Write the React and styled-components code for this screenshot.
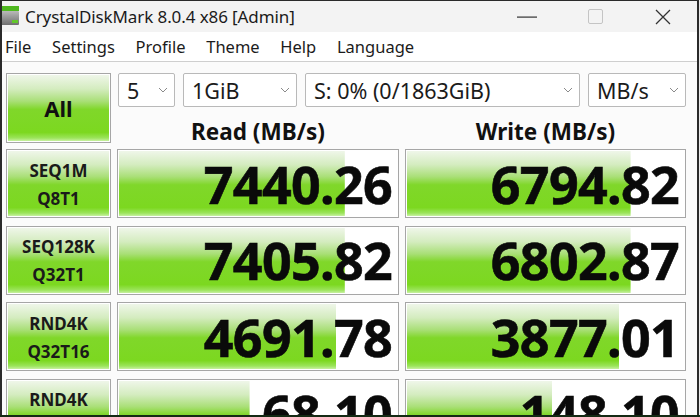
import React from "react";
import styled, { createGlobalStyle } from "styled-components";

const GlobalStyle = createGlobalStyle`
  html, body {
    margin: 0;
    padding: 0;
    background: #e9e9e9;
  }
  body {
    font-family: "Noto Sans", "Open Sans", sans-serif;
  }
`;

const green = `linear-gradient(to bottom,
  #f1f7ec 0%,
  #d4ecbf 22%,
  #a9df77 40%,
  #80d72a 52%,
  #7cd820 86%,
  #9be45a 94%,
  #d6f5b8 100%)`;

const Window = styled.div`
  width: 695px;
  height: 414px;
  overflow: hidden;
  background: #fbfbfb;
  border-top: 1px solid #2a2a2a;
  border-left: 2px solid #2a2a2a;
  border-right: 2px solid #2a2a2a;
  display: flex;
  flex-direction: column;
`;

const TitleBar = styled.div`
  height: 31px;
  flex: none;
  display: flex;
  align-items: center;
  background: #f3f3f3;
  color: #1b1b1b;
  font-size: 17px;
`;

const AppIcon = styled.svg`
  width: 22px;
  height: 24px;
  margin: -6px 3px 0 -2px;
  flex: none;
`;

const Title = styled.span`
  flex: 1;
  letter-spacing: -0.1px;
`;

const WinButton = styled.div`
  width: 68px;
  height: 31px;
  display: flex;
  align-items: center;
  justify-content: center;
`;

const MenuBar = styled.div`
  height: 29px;
  flex: none;
  display: flex;
  align-items: center;
  gap: 20.7px;
  padding-left: 3px;
  background: #ffffff;
  border-bottom: 1px solid #cfcfcf;
  color: #1b1b1b;
  font-size: 16.5px;
`;

const MenuItem = styled.span``;

const Body = styled.div`
  padding: 11px 0 0 4px;
  flex: 1;
  overflow: hidden;
`;

const Top = styled.div`
  display: grid;
  grid-template-columns: 105px 282px 281px;
  grid-template-rows: 34px 36px;
  column-gap: 6px;
`;

const cellBase = `
  box-sizing: border-box;
  border: 1px solid #a6a6a6;
  box-shadow: inset 0 0 0 1px #ffffff;
`;

const AllButton = styled.div`
  ${cellBase}
  grid-row: 1 / 3;
  background: ${green};
  display: flex;
  align-items: center;
  justify-content: center;
  font-weight: 700;
  font-size: 22px;
  color: #111;
`;

const Selects = styled.div`
  grid-column: 2 / 4;
  display: flex;
  gap: 8px;
  padding-left: 1px;
`;

const Select = styled.div`
  box-sizing: border-box;
  width: ${(p) => p.$w}px;
  height: 34px;
  border: 1px solid #b9b9b9;
  border-radius: 2px;
  background: #ffffff;
  display: flex;
  align-items: center;
  justify-content: space-between;
  padding: 0 6px 0 8px;
  font-size: 21.5px;
  color: #1b1b1b;
`;

const Chevron = styled.svg`
  width: 10px;
  height: 6px;
  flex: none;
`;

const Header = styled.div`
  display: flex;
  align-items: flex-end;
  justify-content: center;
  padding-bottom: 0;
  font-weight: 700;
  font-size: 22.5px;
  line-height: 1;
  color: #111;
`;

const Results = styled.div`
  margin-top: 6px;
  display: grid;
  grid-template-columns: 105px 282px 281px;
  grid-auto-rows: 69px;
  column-gap: 6px;
  row-gap: 7.5px;
`;

const Label = styled.div`
  ${cellBase}
  background: ${green};
  display: flex;
  flex-direction: column;
  align-items: center;
  justify-content: center;
  gap: 11px;
  padding-top: 1px;
  font-weight: 700;
  font-size: 17px;
  line-height: 1;
  color: #1a1a1a;
`;

const Value = styled.div`
  ${cellBase}
  background-color: #ffffff;
  background-image: ${green};
  background-repeat: no-repeat;
  background-size: ${(p) => p.$fill}% 100%;
  display: flex;
  align-items: center;
  justify-content: flex-end;
  padding-right: 6px;
  font-weight: 700;
  font-size: 52px;
  letter-spacing: -0.7px;
  line-height: 1;
  color: #0a0a0a;
  -webkit-text-stroke: 0.6px #0a0a0a;
`;

const BottomEdge = styled.div`
  width: 700px;
  height: 3px;
  background: #142a14;
`;

const rows = [
  { a: "SEQ1M", b: "Q8T1", read: "7440.26", rf: 81, write: "6794.82", wf: 80.5 },
  { a: "SEQ128K", b: "Q32T1", read: "7405.82", rf: 81, write: "6802.87", wf: 80.5 },
  { a: "RND4K", b: "Q32T16", read: "4691.78", rf: 78, write: "3877.01", wf: 76.5 },
  { a: "RND4K", b: "Q1T1", read: "68.10", rf: 47, write: "148.10", wf: 52.5 },
];

const Arrow = () => (
  <Chevron viewBox="0 0 10 6">
    <path d="M1 1 L5 5 L9 1" fill="none" stroke="#8a8a8a" strokeWidth="1" />
  </Chevron>
);

const App = () => {
  return (
    <>
      <GlobalStyle />
      <Window>
        <TitleBar>
          <AppIcon viewBox="0 0 22 24">
            <defs>
              <linearGradient id="disk" x1="0" y1="0" x2="0" y2="1">
                <stop offset="0" stopColor="#b9b9b9" />
                <stop offset="1" stopColor="#6f6f6f" />
              </linearGradient>
            </defs>
            <rect x="0" y="4" width="19" height="5" fill="#4fb81f" />
            <rect x="0" y="9" width="19" height="14" rx="1" fill="url(#disk)" />
            <rect x="12" y="18" width="6" height="3" fill="#62c72a" />
          </AppIcon>
          <Title>CrystalDiskMark 8.0.4 x86 [Admin]</Title>
          <WinButton>
            <svg width="20" height="2" viewBox="0 0 20 2">
              <rect x="0" y="0.5" width="20" height="1.2" fill="#333" />
            </svg>
          </WinButton>
          <WinButton>
            <svg width="15" height="15" viewBox="0 0 15 15">
              <rect x="0.5" y="0.5" width="14" height="14" rx="1.5" fill="none" stroke="#c4c4c4" />
            </svg>
          </WinButton>
          <WinButton>
            <svg width="16" height="16" viewBox="0 0 16 16">
              <path d="M1 1 L15 15 M15 1 L1 15" stroke="#333" strokeWidth="1.3" />
            </svg>
          </WinButton>
        </TitleBar>
        <MenuBar>
          <MenuItem>File</MenuItem>
          <MenuItem>Settings</MenuItem>
          <MenuItem>Profile</MenuItem>
          <MenuItem>Theme</MenuItem>
          <MenuItem>Help</MenuItem>
          <MenuItem>Language</MenuItem>
        </MenuBar>
        <Body>
          <Top>
            <AllButton>All</AllButton>
            <Selects>
              <Select $w={57}>
                5
                <Arrow />
              </Select>
              <Select $w={114}>
                1GiB
                <Arrow />
              </Select>
              <Select $w={275}>
                S: 0% (0/1863GiB)
                <Arrow />
              </Select>
              <Select $w={98}>
                MB/s
                <Arrow />
              </Select>
            </Selects>
            <Header>Read (MB/s)</Header>
            <Header>Write (MB/s)</Header>
          </Top>
          <Results>
            {rows.map((r, i) => (
              <React.Fragment key={i}>
                <Label>
                  <span>{r.a}</span>
                  <span>{r.b}</span>
                </Label>
                <Value $fill={r.rf}>{r.read}</Value>
                <Value $fill={r.wf}>{r.write}</Value>
              </React.Fragment>
            ))}
          </Results>
        </Body>
      </Window>
      <BottomEdge />
    </>
  );
};

export default App;
